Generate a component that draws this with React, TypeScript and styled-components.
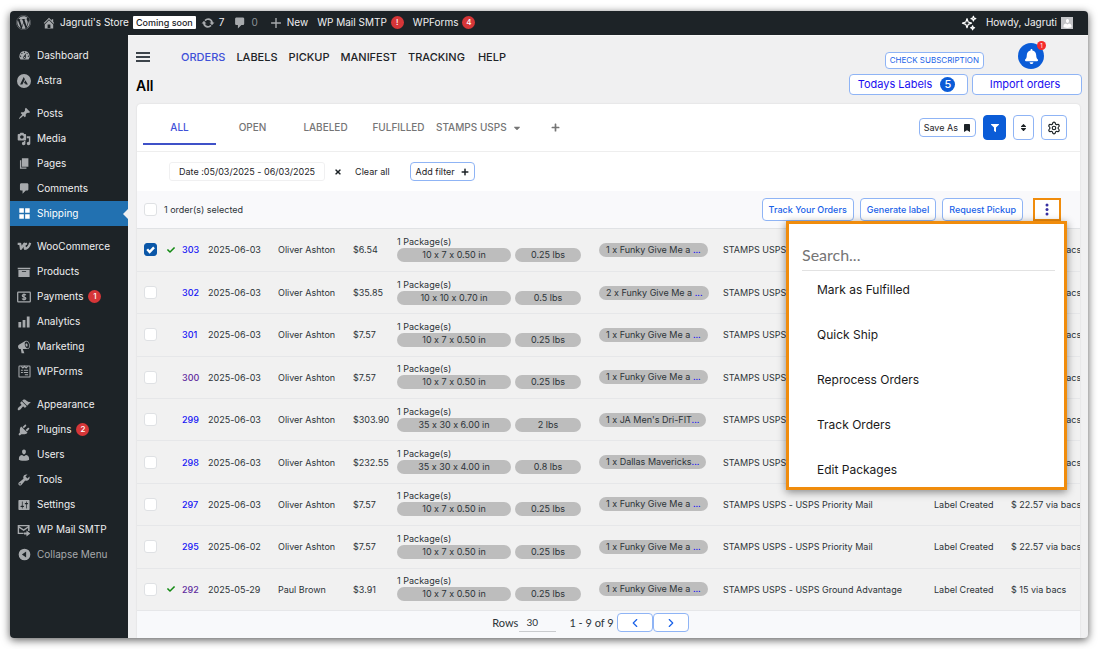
import React from "react";
import styled, { createGlobalStyle, css } from "styled-components";
import { FaWordpress, FaBell, FaCheck, FaPlus, FaBookmark, FaFilter, FaSort, FaTimes, FaCaretDown } from "react-icons/fa";
import { Settings, ChevronLeft, ChevronRight } from "lucide-react";

const GlobalStyle = createGlobalStyle`
  *, *::before, *::after { box-sizing: border-box; }
  body {
    margin: 0;
    background: #fff;
    color: #2c3338;
    font-family: Inter, "Liberation Sans", sans-serif;
    font-size: 10px;
    line-height: 13px;
    font-feature-settings: "calt" 0;
  }
  button, input, select { font: inherit; color: inherit; margin: 0; }
  button { cursor: pointer; }
  a { text-decoration: none; color: inherit; }
  ul { list-style: none; margin: 0; padding: 0; }
  svg { display: block; flex: none; }
`;

const glyphs = {
  dashboard:
    "M3.76 16h12.48A7.998 7.998 0 0 0 10 3a7.998 7.998 0 0 0-6.24 13zM10 4c.55 0 1 .45 1 1s-.45 1-1 1s-1-.45-1-1s.45-1 1-1zM6 6c.55 0 1 .45 1 1s-.45 1-1 1s-1-.45-1-1s.45-1 1-1zm8 0c.55 0 1 .45 1 1s-.45 1-1 1s-1-.45-1-1s.45-1 1-1zm-5.37 5.55L12 7v6c0 1.1-.9 2-2 2s-2-.9-2-2c0-.57.24-1.08.63-1.45zM4 10c.55 0 1 .45 1 1s-.45 1-1 1s-1-.45-1-1s.45-1 1-1zm12 0c.55 0 1 .45 1 1s-.45 1-1 1s-1-.45-1-1s.45-1 1-1zm-5 3c0-.55-.45-1-1-1s-1 .45-1 1s.45 1 1 1s1-.45 1-1z",
  astra:
    "M10 0a10 10 0 1 0 0 20a10 10 0 0 0 0-20zM9.6 4.2l1.7 3.4l-3.6 7.4H4.4zM12 9l3.6 6h-3.2l-.8-1.7H9.7z",
  post: "M10.44 3.02l1.82-1.82l6.36 6.35l-1.83 1.82c-1.05-.68-2.48-.57-3.41.36l-.75.75c-.92.93-1.04 2.35-.35 3.41l-1.83 1.82l-2.41-2.41l-2.8 2.79c-.42.42-3.38 2.71-3.8 2.29s1.86-3.39 2.28-3.81l2.79-2.79L4.1 9.36l1.83-1.82c1.05.69 2.48.57 3.4-.36l.75-.75c.93-.92 1.05-2.35.36-3.41z",
  media:
    "M13 11V4c0-.55-.45-1-1-1h-1.67L9 1H5L3.67 3H2c-.55 0-1 .45-1 1v7c0 .55.45 1 1 1h10c.55 0 1-.45 1-1zM7 4.5c1.38 0 2.5 1.12 2.5 2.5S8.38 9.5 7 9.5S4.5 8.38 4.5 7S5.62 4.5 7 4.5zM14 6h5v10.5c0 1.38-1.12 2.5-2.5 2.5S14 17.88 14 16.5s1.12-2.5 2.5-2.5c.17 0 .34.02.5.05V9h-3V6zm-4 8.05V13h2v3.5c0 1.38-1.12 2.5-2.5 2.5S7 17.88 7 16.5S8.12 14 9.5 14c.17 0 .34.02.5.05z",
  page: "M6 15V2h10v13H6zm-1 1h8v2H3V5h2v11z",
  comment: "M5 2h9c1.1 0 2 .9 2 2v7c0 1.1-.9 2-2 2h-2l-5 5v-5H5c-1.1 0-2-.9-2-2V4c0-1.1.9-2 2-2z",
  shipping: "M9 9V2H2v7h7zm9 0V2h-7v7h7zm-9 9v-7H2v7h7zm9 0v-7h-7v7h7z",
  archive: "M19 4v2H1V4h18zM2 7h16v10H2V7zm11 3V9H7v1h6z",
  chart: "M18 18V2h-4v16h4zm-6 0V7H8v11h4zm-6 0v-8H2v8h4z",
  megaphone:
    "M18.15 5.94c.46 1.62.38 3.22-.02 4.48c-.42 1.28-1.26 2.18-2.3 2.48c-.16.06-.26.06-.4.06c-.06.02-.12.02-.18.02c-.06.02-.14.02-.22.02h-6.8l2.22 5.5c.02.14-.06.26-.14.34c-.08.1-.24.16-.34.16H6.95c-.1 0-.26-.06-.34-.16c-.08-.08-.16-.2-.14-.34l-1-5.5H4.25l-.02-.02c-.5.06-1.08-.18-1.54-.62s-.88-1.08-1.06-1.88c-.24-.8-.2-1.56-.02-2.2c.18-.62.58-1.08 1.06-1.3l.02-.02l9-5.4c.1-.06.18-.1.24-.16c.06-.04.14-.08.24-.12c.16-.08.28-.12.5-.18c1.04-.3 2.24.1 3.22.98s1.84 2.24 2.26 3.86zm-2.58 5.98h-.02c.4-.1.74-.34 1.04-.7c.58-.7.86-1.76.86-3.04c0-.64-.1-1.3-.28-1.98c-.34-1.36-1.02-2.5-1.78-3.24s-1.68-1.1-2.46-.88c-.82.22-1.4.96-1.7 2c-.32 1.04-.28 2.36.06 3.72c.38 1.36 1 2.5 1.8 3.24c.78.74 1.62 1.1 2.48.88zm-2.54-7.08c.22-.04.42-.02.62.04c.38.16.76.48 1.02 1s.42 1.2.42 1.78c0 .3-.04.56-.12.8c-.18.48-.44.84-.86.94c-.34.1-.8-.06-1.14-.4s-.64-.86-.78-1.5c-.18-.62-.12-1.24.02-1.72s.48-.84.82-.94z",
  brush:
    "M14.48 11.06L7.41 3.99l1.5-1.5c.5-.56 2.3-.47 3.51.32c1.21.8 1.43 1.28 2.91 2.1c1.18.64 2.45 1.26 4.45.85zm-.71.71L6.7 4.7L4.93 6.47a.996.996 0 0 0 0 1.41l1.06 1.06c.39.39.39 1.03 0 1.42c-.6.6-1.43 1.11-2.21 1.69c-.35.26-.7.53-1.01.84C1.43 14.23.4 16.08 1.4 17.07c.99 1 2.84-.03 4.18-1.36c.31-.31.58-.66.85-1.02c.57-.78 1.08-1.61 1.69-2.21a.996.996 0 0 1 1.41 0l1.06 1.06c.39.39 1.02.39 1.41 0z",
  plug: "M13.11 4.36L9.87 7.6L8 5.73l3.24-3.24c.35-.34 1.05-.2 1.56.32c.52.51.66 1.21.31 1.55zm-8 1.77l.91-1.12l9.01 9.01l-1.19.84c-.71.71-2.63 1.16-3.82 1.16H6.14L4.9 17.26c-.59.59-1.54.59-2.12 0a1.49 1.49 0 0 1 0-2.12l1.24-1.24v-3.88c0-1.13.4-3.19 1.09-3.89zm7.26 3.97l3.24-3.24c.34-.35 1.04-.21 1.55.31c.52.51.66 1.21.31 1.55l-3.24 3.25z",
  user: "M10 9.25c-2.27 0-2.73-3.44-2.73-3.44C7 4.02 7.82 2 9.97 2c2.16 0 2.98 2.02 2.71 3.81c0 0-.41 3.44-2.68 3.44zm0 2.57L12.72 10c2.39 0 4.52 2.33 4.52 4.53v2.49s-3.65 1.13-7.24 1.13c-3.65 0-7.24-1.13-7.24-1.13v-2.49c0-2.25 1.94-4.48 4.47-4.48z",
  wrench:
    "M16.68 9.77a4.543 4.543 0 0 1-4.95.99l-5.41 6.52c-.99.99-2.59.99-3.58 0s-.99-2.59 0-3.57l6.52-5.42c-.68-1.65-.35-3.61.99-4.95c1.28-1.28 3.12-1.62 4.72-1.06l-2.89 2.89l2.82 2.82l2.86-2.87c.53 1.58.18 3.39-1.08 4.65zM3.81 16.21c.4.39 1.04.39 1.43 0c.4-.4.4-1.04 0-1.43c-.39-.4-1.03-.4-1.43 0a1.02 1.02 0 0 0 0 1.43z",
  sliders:
    "M18 16V4c0-.55-.45-1-1-1H3c-.55 0-1 .45-1 1v12c0 .55.45 1 1 1h14c.55 0 1-.45 1-1zM8 11h1c.55 0 1 .45 1 1s-.45 1-1 1H8v1.5c0 .28-.22.5-.5.5s-.5-.22-.5-.5V13H6c-.55 0-1-.45-1-1s.45-1 1-1h1V5.5c0-.28.22-.5.5-.5s.5.22.5.5V11zm5-2h-1c-.55 0-1-.45-1-1s.45-1 1-1h1V5.5c0-.28.22-.5.5-.5s.5.22.5.5V7h1c.55 0 1 .45 1 1s-.45 1-1 1h-1v5.5c0 .28-.22.5-.5.5s-.5-.22-.5-.5V9z",
  home: "M16 8.5l1.53 1.53l-1.06 1.06L10 4.6l-6.47 6.49l-1.06-1.06L10 2.5l4 4v-2h2v4zm-6-2.46l6 5.99V18H4v-5.97zM12 17v-5H8v5h4z",
  update:
    "M10.2 3.28c3.53 0 6.43 2.61 6.92 6h2.08l-3.5 4-3.5-4h2.32a4.439 4.439 0 0 0-4.32-3.45c-1.45 0-2.73.71-3.54 1.78L4.95 5.66a6.965 6.965 0 0 1 5.25-2.38zm-.4 13.44c-3.52 0-6.43-2.61-6.92-6H.8l3.5-4c1.17 1.33 2.33 2.67 3.5 4H5.48a4.439 4.439 0 0 0 4.32 3.45c1.45 0 2.73-.71 3.54-1.78l1.71 1.95a6.95 6.95 0 0 1-5.25 2.38z",
  plus: "M17 9v2h-6v6H9v-6H3V9h6V3h2v6z",
  collapse: "M10 1a9 9 0 1 0 0 18a9 9 0 0 0 0-18zM12.5 5.5v9L6 10z",
  mail: "M1 3h17v8.5h-2.2V7.2L9.5 11.6L3 7v6.8h6.500v2H1zM3 4.600l6.500 4.500l6.500-4.500zM13.500 10.800l5.500 4.200l-5.500 4.200v-2.800H10v-2.800h3.500z",
};

type GlyphName = keyof typeof glyphs;

const Glyph = ({ name, size = 13 }: { name: GlyphName; size?: number }) => (
  <svg width={size} height={size} viewBox="0 0 20 20" fill="currentColor" fillRule="evenodd" aria-hidden="true">
    <path d={glyphs[name]} />
  </svg>
);

const WooIcon = () => (
  <svg width="15" height="13" viewBox="0 0 22 20" fill="none" stroke="currentColor" strokeWidth="3.4" strokeLinejoin="round" aria-hidden="true">
    <path d="M.5 5.800H4.500L5.500 13.500L10.800 5.500L11.500 13.500C14.500 13.500 18 10.500 19.800 4.500M11.500 7C12.500 5.500 13.500 5.800 15 5.800" />
  </svg>
);

const PaymentsIcon = () => (
  <svg width="14" height="14" viewBox="0 0 20 20" fill="none" stroke="currentColor" strokeWidth="1.800" aria-hidden="true">
    <rect x="1" y="3" width="18" height="14" rx="1" />
    <path d="M12.500 7.600c-.4-1-1.400-1.300-2.500-1.300s-2.400.5-2.400 1.800c0 2.600 5 1.200 5 3.800 0 1.300-1.300 1.800-2.600 1.800s-2.300-.5-2.700-1.500M10 5v10" />
  </svg>
);

const FormsIcon = () => (
  <svg width="13" height="13" viewBox="0 0 20 20" fill="none" stroke="currentColor" strokeWidth="1.600" aria-hidden="true">
    <rect x="1.500" y="1.500" width="17" height="17" rx="1" />
    <path d="M5 2l2.500 2.500L10 2l2.500 2.500L15 2M4.500 8h3M9 8h6.500M4.500 11.500h3M9 11.500h6.500M10.500 15h5" />
  </svg>
);

const SparkIcon = () => (
  <svg width="16" height="16" viewBox="0 0 20 20" fill="none" stroke="#fff" strokeWidth="1.500" strokeLinejoin="round" aria-hidden="true">
    <path d="M7.500 4.500l1.500 4.200 4.200 1.500-4.200 1.500-1.500 4.200-1.500-4.200-4.200-1.500L6 8.700z" />
    <path d="M15.500 1.500l.8 2.200 2.200.8-2.200.8-.8 2.200-.8-2.200-2.200-.8 2.200-.8zM14.500 13.500l.7 1.800 1.800.7-1.800.7-.7 1.800-.7-1.800-1.800-.7 1.800-.7z" />
  </svg>
);

const Frame = styled.div`
  display: flex;
  flex-direction: column;
  min-height: calc(100vh - 22px);
  margin: 11px 12px 11px 10px;
  border-radius: 4px;
  overflow: hidden;
  background: #f0f0f1;
  box-shadow: 0 2px 8px rgba(0, 0, 0, 0.65);
`;

const AdminBar = styled.header`
  display: flex;
  align-items: center;
  height: 24px;
  padding: 0 15px 1px 6px;
  background: #1d2327;
  color: #f0f0f1;
`;

const BarLink = styled.a<{ $gap?: number; $dim?: boolean }>`
  display: flex;
  align-items: center;
  gap: 4px;
  margin-left: ${(p) => p.$gap ?? 9}px;
  white-space: nowrap;
  color: ${(p) => (p.$dim ? "#8c9196" : "#f0f0f1")};
  svg { color: #a7aaad; }
`;

const SoonTag = styled.a`
  height: 13px;
  margin-left: 4px;
  padding: 0 3px;
  border-radius: 1px;
  background: #fff;
  color: #1d2327;
  font-size: 9px;
  font-weight: 500;
  white-space: nowrap;
`;

const Count = styled.span`
  display: inline-flex;
  align-items: center;
  justify-content: center;
  width: 13px;
  height: 13px;
  border-radius: 50%;
  background: #d63638;
  color: #fff;
  font-size: 8px;
  font-weight: 500;
`;

const Spacer = styled.div`
  flex: 1;
`;

const Avatar = styled.span`
  display: flex;
  align-items: flex-end;
  justify-content: center;
  width: 12px;
  height: 12px;
  background: #c3c4c7;
  && svg { color: #fff; }
`;

const Body = styled.div`
  display: flex;
  flex: 1;
`;

const Sidebar = styled.nav`
  flex: none;
  width: 118px;
  padding: 8px 0 24px;
  background: #1d2327;
`;

const MenuGroup = styled.ul`
  & + & { margin-top: 8px; }
`;

const MenuLink = styled.a<{ $active?: boolean; $dim?: boolean }>`
  position: relative;
  display: flex;
  align-items: center;
  height: 25px;
  padding-left: 6px;
  font-size: 10px;
  white-space: nowrap;
  color: ${(p) => (p.$dim ? "#a7aaad" : "#f0f0f1")};
  ${(p) =>
    p.$active &&
    css`
      background: #2271b1;
      color: #fff;
      &::after {
        content: "";
        position: absolute;
        right: 0;
        border: 5px solid transparent;
        border-right-color: #f0f0f1;
      }
    `}
`;

const MenuIcon = styled.span<{ $active?: boolean }>`
  display: flex;
  justify-content: center;
  width: 16px;
  margin-right: 5px;
  color: ${(p) => (p.$active ? "#fff" : "#a7aaad")};
`;

const MenuText = styled.span`
  margin-right: 5px;
`;

const Main = styled.main`
  display: flex;
  flex-direction: column;
  flex: 1;
  min-width: 0;
  padding: 0 8px 0 9px;
  border-top: 1px solid #f8f8f8;
`;

const PageHeader = styled.div`
  display: flex;
  justify-content: space-between;
  margin: 0 -2px 0 -1px;
  padding: 7px 0 9px;
`;

const HeaderLeft = styled.div`
  display: flex;
  flex-direction: column;
  gap: 11px;
  padding-top: 5px;
`;

const TopNav = styled.nav`
  display: flex;
  align-items: center;
  gap: 11px;
  height: 18px;
  font-size: 11px;
  font-weight: 500;
`;

const Burger = styled.button`
  width: 14px;
  height: 10px;
  margin-right: 20px;
  padding: 0;
  border: solid #3c434a;
  border-width: 2px 0;
  background: linear-gradient(#3c434a, #3c434a) center / 100% 2px no-repeat;
`;

const TopLink = styled.a<{ $active?: boolean }>`
  color: ${(p) => (p.$active ? "#3f51d8" : "#1d2327")};
  &:last-child { margin-left: 2px; }
`;

const Title = styled.h1`
  margin: 0;
  font-size: 14px;
  line-height: 18px;
  font-weight: 600;
  color: #000;
`;

const HeaderRight = styled.div`
  display: flex;
  flex-direction: column;
  gap: 5px;
`;

const HeaderTop = styled.div`
  display: flex;
  justify-content: flex-end;
  align-items: flex-end;
  gap: 34px;
  height: 26px;
  padding-right: 38px;
`;

const HeaderButtons = styled.div`
  display: flex;
  gap: 4px;
`;

const outline = css`
  display: inline-flex;
  align-items: center;
  justify-content: center;
  border: 1px solid #8fb4f5;
  border-radius: 4px;
  background: #fff;
  white-space: nowrap;
`;

const SubscriptionButton = styled.button`
  ${outline}
  height: 17px;
  padding: 0 4px;
  color: #1a62e8;
  font-size: 8px;
`;

const BellButton = styled.button`
  position: relative;
  display: flex;
  align-items: center;
  justify-content: center;
  width: 26px;
  height: 26px;
  padding: 0;
  border: 0;
  border-radius: 50%;
  background: #0b5cd7;
  color: #fff;
`;

const BellBadge = styled.span`
  position: absolute;
  top: -2px;
  right: -2px;
  width: 9px;
  height: 9px;
  border-radius: 50%;
  background: #f52b2b;
  font-size: 6px;
  line-height: 9px;
`;

const HeaderButton = styled.button<{ $w: number }>`
  ${outline}
  gap: 8px;
  width: ${(p) => p.$w}px;
  height: 21px;
  padding: 0 4px 1px 0;
  color: #1a0df0;
  font-size: 11px;
`;

const BlueCount = styled.span`
  width: 15px;
  height: 15px;
  border-radius: 50%;
  background: #0b5cd7;
  color: #fff;
  font-size: 11px;
  line-height: 15px;
  font-weight: 500;
`;

const Card = styled.section`
  display: flex;
  flex-direction: column;
  flex: 1;
  border-radius: 4px 4px 0 0;
  background: #fff;
  box-shadow: 0 0 2px rgba(0, 0, 0, 0.12);
`;

const TabBar = styled.div`
  display: flex;
  align-items: center;
  height: 48px;
  padding: 0 13px 0 6px;
  border-bottom: 1px solid #eee;
`;

const Tab = styled.button<{ $active?: boolean }>`
  width: 73px;
  height: 35px;
  padding: 2px 0 0;
  border: 0;
  border-bottom: 2px solid ${(p) => (p.$active ? "#3f51c8" : "transparent")};
  background: none;
  color: ${(p) => (p.$active ? "#3f51d8" : "#757575")};
  font-weight: 500;
`;

const TabMenu = styled.button`
  display: flex;
  align-items: center;
  gap: 5px;
  padding: 0 0 0 1px;
  border: 0;
  background: none;
  color: #757575;
  font-weight: 500;
  white-space: nowrap;
`;

const PlainButton = styled.button<{ $gap: number }>`
  margin-left: ${(p) => p.$gap}px;
  padding: 0;
  border: 0;
  background: none;
  white-space: nowrap;
`;

const Tools = styled.div`
  display: flex;
  align-items: center;
  gap: 7px;
  margin-left: auto;
`;

const SmallButton = styled.button`
  ${outline}
  gap: 5px;
  height: 19px;
  padding: 0 4px;
  color: #1d2327;
  font-size: 9px;
`;

const IconButton = styled.button<{ $solid?: boolean; $w: number }>`
  ${outline}
  width: ${(p) => p.$w}px;
  height: 25px;
  padding: 0;
  color: #1d2327;
  ${(p) =>
    p.$solid &&
    css`
      border-color: #0b5cd7;
      background: #0b5cd7;
      color: #fff;
    `}
`;

const FilterBar = styled.div`
  display: flex;
  align-items: center;
  height: 39px;
  padding: 0 32px;
  font-size: 9px;
  color: #1d2327;
`;

const DateChip = styled.span`
  padding: 2px 9px;
  border: 1px solid #f0f0f1;
  border-radius: 3px;
  white-space: nowrap;
`;

const AddFilter = styled(SmallButton)`
  gap: 6px;
  margin-left: 20px;
  padding: 0 5px;
`;

const BulkBar = styled.div`
  display: flex;
  align-items: center;
  height: 38px;
  padding: 0 19px 0 7px;
  border-bottom: 1px solid #e0e2e5;
  background: #f9f9fb;
`;

const Check = styled.input`
  display: block;
  flex: none;
  width: 13px;
  height: 13px;
  appearance: none;
  border: 1px solid #dfe1e4;
  border-radius: 3px;
  background: #fff;
  &:checked {
    border-color: #0b57a8;
    background: #0b57a8;
  }
  &:checked::before {
    content: "";
    display: block;
    width: 11px;
    height: 11px;
    background: #fff;
    clip-path: polygon(12% 50%, 28% 36%, 42% 52%, 74% 18%, 90% 34%, 42% 84%);
  }
`;

const SelectedLabel = styled.label`
  display: flex;
  align-items: center;
  gap: 7px;
  font-size: 9px;
`;

const BulkActions = styled.div`
  display: flex;
  align-items: center;
  gap: 6px;
  margin-left: auto;
`;

const BulkButton = styled.button`
  ${outline}
  height: 23px;
  padding: 0 6px;
  color: #1a62e8;
  font-size: 9px;
  font-weight: 500;
`;

const MoreWrap = styled.div`
  position: relative;
  z-index: 2;
  margin-left: 4px;
`;

const MoreButton = styled.button`
  display: flex;
  align-items: center;
  justify-content: center;
  width: 28px;
  height: 23px;
  padding: 0;
  border: 2px solid #f08c0c;
  background: #fff;
  color: #3730a3;
`;

const Menu = styled.div`
  position: absolute;
  top: 23px;
  right: -6px;
  width: 281px;
  padding: 20px 9px 6px 13px;
  border: 3px solid #f08c0c;
  background: #fff;
  box-shadow: 0 2px 8px rgba(0, 0, 0, 0.45);
`;

const MenuSearch = styled.input`
  display: block;
  width: 100%;
  height: 27px;
  padding: 0 0 6px;
  border: 0;
  border-bottom: 1px solid #e2e2e2;
  outline: 0;
  background: none;
  font-family: Lato, Carlito, sans-serif;
  font-size: 16px;
  &::placeholder { color: #757575; opacity: 1; }
`;

const MenuList = styled.ul`
  padding: 6px 0 0 15px;
  font-size: 12px;
  color: #1a1a1a;
`;

const MenuItem = styled.li`
  height: 24px;
  & + & { margin-top: 21px; }
`;

const MenuAction = styled.button`
  height: 24px;
  padding: 0;
  border: 0;
  background: none;
`;

const TableWrap = styled.div`
  display: flex;
  flex: 1;
  min-width: 0;
  overflow: hidden;
`;

const Table = styled.table`
  width: 100%;
  min-width: 880px;
  table-layout: fixed;
  border-collapse: collapse;
  background: #f1f1f1;
  font-size: 9px;
`;

const Col = styled.col<{ $w?: number }>`
  width: ${(p) => (p.$w ? p.$w + "px" : "auto")};
`;

const Cell = styled.td`
  height: 42px;
  padding: 0;
  border-bottom: 1px solid #e6e7e9;
  white-space: nowrap;
  overflow: hidden;
  &:first-child { padding-left: 7px; }
`;

const PackageCell = styled(Cell)`
  padding-bottom: 3px;
`;

const OrderLink = styled.a<{ $seen?: boolean }>`
  color: ${(p) => (p.$seen ? "#5f2b9e" : "#1414f5")};
  font-weight: 500;
`;

const PackageLine = styled.div`
  display: flex;
  gap: 4px;
`;

const Pill = styled.span<{ $w?: number }>`
  display: inline-block;
  width: ${(p) => (p.$w ? p.$w + "px" : "auto")};
  height: 14px;
  padding: 0 7px;
  border-radius: 7px;
  background: #bdbdbd;
  line-height: 14px;
  text-align: center;
`;

const MoreLink = styled.a`
  color: #1414f5;
`;

const Pager = styled.footer`
  display: flex;
  align-items: center;
  justify-content: center;
  height: 27px;
  padding: 0 36px 4px 0;
  background: #f8f9fb;
  font-family: Lato, Carlito, sans-serif;
  font-size: 11px;
`;

const RowsLabel = styled.label`
  display: flex;
  align-items: center;
  gap: 1px;
  margin-right: 13px;
`;

const RowsInput = styled.input`
  width: 37px;
  height: 18px;
  padding: 0 7px;
  border: 0;
  border-bottom: 1px solid #c9cbce;
  background: none;
  outline: 0;
  font-size: 10px;
`;

const PageButton = styled.button`
  ${outline}
  width: 36px;
  height: 19px;
  padding: 0;
  color: #1a62e8;
  &:first-of-type { margin-left: 3px; }
`;

const menuGroups: { label: string; icon: React.ReactNode; badge?: string; active?: boolean; dim?: boolean }[][] = [
  [
    { label: "Dashboard", icon: <Glyph name="dashboard" /> },
    { label: "Astra", icon: <Glyph name="astra" size={14} /> },
  ],
  [
    { label: "Posts", icon: <Glyph name="post" /> },
    { label: "Media", icon: <Glyph name="media" size={14} /> },
    { label: "Pages", icon: <Glyph name="page" /> },
    { label: "Comments", icon: <Glyph name="comment" /> },
    { label: "Shipping", icon: <Glyph name="shipping" />, active: true },
  ],
  [
    { label: "WooCommerce", icon: <WooIcon /> },
    { label: "Products", icon: <Glyph name="archive" size={14} /> },
    { label: "Payments", icon: <PaymentsIcon />, badge: "1" },
    { label: "Analytics", icon: <Glyph name="chart" size={14} /> },
    { label: "Marketing", icon: <Glyph name="megaphone" size={14} /> },
    { label: "WPForms", icon: <FormsIcon /> },
  ],
  [
    { label: "Appearance", icon: <Glyph name="brush" size={14} /> },
    { label: "Plugins", icon: <Glyph name="plug" size={14} />, badge: "2" },
    { label: "Users", icon: <Glyph name="user" size={14} /> },
    { label: "Tools", icon: <Glyph name="wrench" size={14} /> },
    { label: "Settings", icon: <Glyph name="sliders" size={14} /> },
    { label: "WP Mail SMTP", icon: <Glyph name="mail" size={14} /> },
    { label: "Collapse Menu", icon: <Glyph name="collapse" />, dim: true },
  ],
];

const funky = "1 x Funky Give Me a ";
const priority = "STAMPS USPS - USPS Priority Mail";
const backs = "$ 22.57 via bacs";

const orders = [
  { id: 303, date: "2025-06-03", name: "Oliver Ashton", total: "$6.54", size: "10 x 7 x 0.50 in", weight: "0.25 lbs", item: funky, checked: true, done: true },
  { id: 302, date: "2025-06-03", name: "Oliver Ashton", total: "$35.85", size: "10 x 10 x 0.70 in", weight: "0.5 lbs", item: "2 x Funky Give Me a " },
  { id: 301, date: "2025-06-03", name: "Oliver Ashton", total: "$7.57", size: "10 x 7 x 0.50 in", weight: "0.25 lbs", item: funky },
  { id: 300, date: "2025-06-03", name: "Oliver Ashton", total: "$7.57", size: "10 x 7 x 0.50 in", weight: "0.25 lbs", item: funky, seen: true },
  { id: 299, date: "2025-06-03", name: "Oliver Ashton", total: "$303.90", size: "35 x 30 x 6.00 in", weight: "2 lbs", item: "1 x JA Men's Dri-FIT" },
  { id: 298, date: "2025-06-03", name: "Oliver Ashton", total: "$232.55", size: "35 x 30 x 4.00 in", weight: "0.8 lbs", item: "1 x Dallas Mavericks" },
  { id: 297, date: "2025-06-03", name: "Oliver Ashton", total: "$7.57", size: "10 x 7 x 0.50 in", weight: "0.25 lbs", item: funky },
  { id: 295, date: "2025-06-02", name: "Oliver Ashton", total: "$7.57", size: "10 x 7 x 0.50 in", weight: "0.25 lbs", item: funky },
  { id: 292, date: "2025-05-29", name: "Paul Brown", total: "$3.91", size: "10 x 7 x 0.50 in", weight: "0.25 lbs", item: funky, seen: true, done: true, service: "STAMPS USPS - USPS Ground Advantage", paid: "$ 15 via bacs" },
];

const columns = [30, 15, 26, 70, 75, 44, 202, 124, 211, 77, undefined];

export default function App() {
  return (
    <>
      <GlobalStyle />
      <Frame>
        <AdminBar>
          <BarLink href="#" $gap={0} aria-label="WordPress"><FaWordpress size={15} /></BarLink>
          <BarLink href="#" $gap={11}><Glyph name="home" size={14} />Jagruti's Store</BarLink>
          <SoonTag href="#">Coming soon</SoonTag>
          <BarLink href="#" $gap={5}><Glyph name="update" size={14} />7</BarLink>
          <BarLink href="#" $gap={9} $dim><Glyph name="comment" size={14} />0</BarLink>
          <BarLink href="#" $gap={11}><Glyph name="plus" size={14} />New</BarLink>
          <BarLink href="#">WP Mail SMTP <Count>!</Count></BarLink>
          <BarLink href="#">WPForms <Count>4</Count></BarLink>
          <Spacer />
          <SparkIcon />
          <BarLink href="#">Howdy, Jagruti <Avatar><Glyph name="user" size={11} /></Avatar></BarLink>
        </AdminBar>
        <Body>
          <Sidebar aria-label="Admin">
            {menuGroups.map((group) => (
              <MenuGroup key={group[0].label}>
                {group.map((m) => (
                  <li key={m.label}>
                    <MenuLink href="#" $active={m.active} $dim={m.dim}>
                      <MenuIcon $active={m.active}>{m.icon}</MenuIcon>
                      <MenuText>{m.label}</MenuText>
                      {m.badge && <Count>{m.badge}</Count>}
                    </MenuLink>
                  </li>
                ))}
              </MenuGroup>
            ))}
          </Sidebar>
          <Main>
            <PageHeader>
              <HeaderLeft>
                <TopNav aria-label="Shipping">
                  <Burger aria-label="Menu" />
                  {["ORDERS", "LABELS", "PICKUP", "MANIFEST", "TRACKING", "HELP"].map((t, i) => (
                    <TopLink key={t} href="#" $active={i === 0}>{t}</TopLink>
                  ))}
                </TopNav>
                <Title>All</Title>
              </HeaderLeft>
              <HeaderRight>
                <HeaderTop>
                  <SubscriptionButton>CHECK SUBSCRIPTION</SubscriptionButton>
                  <BellButton aria-label="Notifications"><FaBell size={15} /><BellBadge>1</BellBadge></BellButton>
                </HeaderTop>
                <HeaderButtons>
                  <HeaderButton $w={119}>Todays Labels <BlueCount>5</BlueCount></HeaderButton>
                  <HeaderButton $w={110}>Import orders</HeaderButton>
                </HeaderButtons>
              </HeaderRight>
            </PageHeader>
            <Card>
              <TabBar>
                {["ALL", "OPEN", "LABELED", "FULFILLED"].map((t, i) => (
                  <Tab key={t} $active={i === 0}>{t}</Tab>
                ))}
                <TabMenu>STAMPS USPS <FaCaretDown size={10} /></TabMenu>
                <PlainButton $gap={29} aria-label="Add tab"><FaPlus size={9} color="#757575" /></PlainButton>
                <Tools>
                  <SmallButton>Save As <FaBookmark size={8} /></SmallButton>
                  <IconButton $w={23} $solid aria-label="Filter"><FaFilter size={8} /></IconButton>
                  <IconButton $w={21} aria-label="Sort"><FaSort size={9} /></IconButton>
                  <IconButton $w={26} aria-label="Settings"><Settings size={14} /></IconButton>
                </Tools>
              </TabBar>
              <FilterBar>
                <DateChip>Date :05/03/2025 - 06/03/2025</DateChip>
                <PlainButton $gap={9} aria-label="Remove date filter"><FaTimes size={8} /></PlainButton>
                <PlainButton $gap={13}>Clear all</PlainButton>
                <AddFilter>Add filter <FaPlus size={8} /></AddFilter>
              </FilterBar>
              <BulkBar>
                <SelectedLabel><Check type="checkbox" />1 order(s) selected</SelectedLabel>
                <BulkActions>
                  <BulkButton>Track Your Orders</BulkButton>
                  <BulkButton>Generate label</BulkButton>
                  <BulkButton>Request Pickup</BulkButton>
                  <MoreWrap>
                    <MoreButton aria-label="More actions">
                      <svg width="4" height="13" viewBox="0 0 4 13" fill="currentColor" aria-hidden="true">
                        <circle cx="2" cy="2" r="1.500" /><circle cx="2" cy="6.500" r="1.500" /><circle cx="2" cy="11" r="1.500" />
                      </svg>
                    </MoreButton>
                    <Menu>
                      <MenuSearch placeholder="Search..." aria-label="Search actions" />
                      <MenuList>
                        {["Mark as Fulfilled", "Quick Ship", "Reprocess Orders", "Track Orders", "Edit Packages"].map((t) => (
                          <MenuItem key={t}><MenuAction>{t}</MenuAction></MenuItem>
                        ))}
                      </MenuList>
                    </Menu>
                  </MoreWrap>
                </BulkActions>
              </BulkBar>
              <TableWrap>
                <Table>
                  <colgroup>
                    {columns.map((w, i) => <Col key={i} $w={w} />)}
                  </colgroup>
                  <tbody>
                    {orders.map((o) => (
                      <tr key={o.id}>
                        <Cell><Check type="checkbox" defaultChecked={o.checked} aria-label={`Select order ${o.id}`} /></Cell>
                        <Cell>{o.done && <FaCheck size={8} color="#138a13" />}</Cell>
                        <Cell><OrderLink href="#" $seen={o.seen}>{o.id}</OrderLink></Cell>
                        <Cell>{o.date}</Cell>
                        <Cell>{o.name}</Cell>
                        <Cell>{o.total}</Cell>
                        <PackageCell>
                          1 Package(s)
                          <PackageLine><Pill $w={114}>{o.size}</Pill><Pill $w={66}>{o.weight}</Pill></PackageLine>
                        </PackageCell>
                        <Cell><Pill>{o.item}<MoreLink href="#">...</MoreLink></Pill></Cell>
                        <Cell>{o.service ?? priority}</Cell>
                        <Cell>Label Created</Cell>
                        <Cell>{o.paid ?? backs}</Cell>
                      </tr>
                    ))}
                  </tbody>
                </Table>
              </TableWrap>
              <Pager>
                <RowsLabel>Rows <RowsInput defaultValue="30" /></RowsLabel>
                1 - 9 of 9
                <PageButton aria-label="Previous page"><ChevronLeft size={14} /></PageButton>
                <PageButton aria-label="Next page"><ChevronRight size={14} /></PageButton>
              </Pager>
            </Card>
          </Main>
        </Body>
      </Frame>
    </>
  );
}
